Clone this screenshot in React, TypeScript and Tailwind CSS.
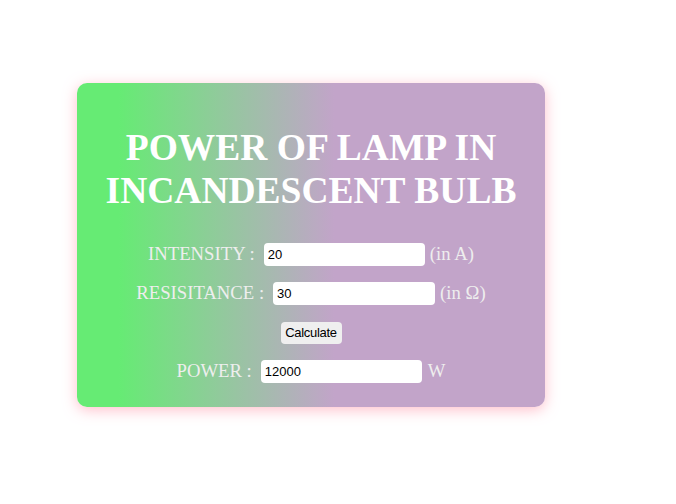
import React from "react";

const serif = { fontFamily: '"Liberation Serif", "Times New Roman", serif' };

export default function App() {
  return (
    <div className="w-[676px] h-[504px] bg-white overflow-hidden">
      <div
        className="ml-[77px] mt-[83px] w-[468px] h-[324px] rounded-[10px] bg-[linear-gradient(to_right,#66eb74_9%,#c2a4c9_55%)] shadow-[0_3px_14px_rgba(255,170,185,0.75)] pt-[43px] flex flex-col items-center"
        style={serif}
      >
        <h1 className="text-[37.5px] leading-[43px] font-bold text-white text-center [font-family:'Liberation_Serif',serif]">
          POWER OF LAMP IN
          <br />
          INCANDESCENT BULB
        </h1>
        <div className="mt-[23px] flex flex-col items-center text-[18.7px] text-[#eeeeee] [font-family:'Liberation_Serif',serif]">
          <div className="h-[39px] flex items-center">
            <span>INTENSITY :</span>
            <input
              readOnly
              value="20"
              className="ml-[9px] w-[161px] h-[23px] rounded-[4px] bg-white px-[4px] text-[13px] text-black outline-none [font-family:'Liberation_Sans',Arial,sans-serif]"
            />
            <span className="ml-[5px]">(in A)</span>
          </div>
          <div className="h-[39px] flex items-center">
            <span>RESISITANCE :</span>
            <input
              readOnly
              value="30"
              className="ml-[9px] w-[162px] h-[23px] rounded-[4px] bg-white px-[4px] text-[13px] text-black outline-none [font-family:'Liberation_Sans',Arial,sans-serif]"
            />
            <span className="ml-[5px]">(in Ω)</span>
          </div>
          <div className="h-[39px] flex items-center">
            <button className="h-[22px] w-[61px] rounded-[4px] bg-[#efefef] text-[13px] tracking-[-0.3px] text-black [font-family:'Liberation_Sans',Arial,sans-serif]">
              Calculate
            </button>
          </div>
          <div className="h-[39px] flex items-center">
            <span>POWER :</span>
            <input
              readOnly
              value="12000"
              className="ml-[9px] w-[161px] h-[23px] rounded-[4px] bg-white px-[4px] text-[13px] text-black outline-none [font-family:'Liberation_Sans',Arial,sans-serif]"
            />
            <span className="ml-[6px]">W</span>
          </div>
        </div>
      </div>
    </div>
  );
}
